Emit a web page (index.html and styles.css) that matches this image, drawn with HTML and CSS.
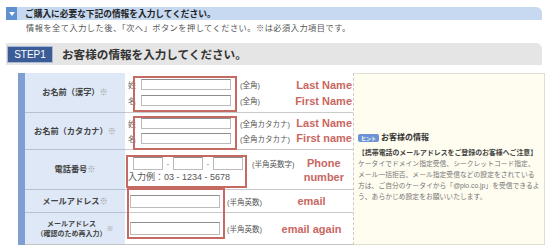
FILE: index.html
```html
<!DOCTYPE html>
<html lang="ja">
	<head>
		<meta charset="UTF-8" />
		<meta name="viewport" content="width=device-width, initial-scale=1.0" />
		<title>お客様情報の入力</title>

		<link rel="stylesheet" href="styles.css">
	</head>

	<body>
		<div class="notice">
			<span class="notice__icon"></span>
			<span class="notice__title">ご購入に必要な下記の情報を入力してください。</span>
		</div>
		<p class="lead">情報を全て入力した後、「次へ」ボタンを押してください。※は必須入力項目です。</p>

		<div class="step">
			<span class="step__label">STEP1</span>
			<h2 class="step__title">お客様の情報を入力してください。</h2>
		</div>

		<div class="form">
			<div class="form__stripe"></div>

			<div class="label">お名前（漢字）<span class="req">※</span></div>
			<div class="field">
				<div class="pairs">
					<div class="pair"><span class="pair__key">姓</span><input type="text" class="input input--name" /><span class="note">(全角)</span></div>
					<div class="pair"><span class="pair__key">名</span><input type="text" class="input input--name" /><span class="note">(全角)</span></div>
				</div>
				<div class="memo"><span>Last Name</span><span>First Name</span></div>
			</div>

			<div class="label">お名前（カタカナ）<span class="req">※</span></div>
			<div class="field">
				<div class="pairs pairs--tight">
					<div class="pair"><span class="pair__key">姓</span><input type="text" class="input input--name" /><span class="note">(全角カタカナ)</span></div>
					<div class="pair"><span class="pair__key">名</span><input type="text" class="input input--name" /><span class="note">(全角カタカナ)</span></div>
				</div>
				<div class="memo memo--tight"><span>Last Name</span><span>First name</span></div>
			</div>

			<div class="label">電話番号<span class="req">※</span></div>
			<div class="field">
				<div class="phone">
					<div class="phone__inputs">
						<input type="text" class="input input--tel" /><span class="dash">-</span>
						<input type="text" class="input input--tel" /><span class="dash">-</span>
						<input type="text" class="input input--tel" />
						<span class="note note--phone">(半角英数字)</span>
					</div>
					<div class="phone__example">入力例：03 - 1234 - 5678</div>
				</div>
				<div class="memo memo--phone"><span>Phone</span><span>number</span></div>
			</div>

			<div class="label">メールアドレス<span class="req">※</span></div>
			<div class="field field--mail">
				<input type="text" class="input input--mail" /><span class="note note--mail">(半角英数)</span>
				<div class="memo memo--mail">email</div>
			</div>

			<div class="label label--last">メールアドレス<br />（確認のため再入力）<span class="req">※</span></div>
			<div class="field field--mail field--last">
				<input type="text" class="input input--mail" /><span class="note note--mail">(半角英数)</span>
				<div class="memo memo--mail">email again</div>
			</div>

			<div class="hint">
				<p class="hint__title"><span class="badge">ヒント</span>お客様の情報</p>
				<p class="hint__caution">【携帯電話のメールアドレスをご登録のお客様へご注意】</p>
				<p class="hint__text">ケータイでドメイン指定受信、シークレットコード指定、<br />メール一括拒否、メール指定受信などの設定をされている<br />方は、ご自分のケータイから「@pio.co.jp」を受信できるよ<br />う、あらかじめ設定をお願いいたします。</p>
			</div>

			<!-- annotation frames -->
			<div class="mark mark--name"></div>
			<div class="mark mark--kana"></div>
			<div class="mark mark--tel"></div>
			<div class="mark mark--mail"></div>
		</div>
	</body>
</html>
```

FILE: styles.css
```css
* {
	margin: 0;
	padding: 0;
	box-sizing: border-box;
}

body {
	font-family: "Liberation Sans", "Noto Sans CJK JP", sans-serif;
	color: #333;
	background: #fff;
}

.notice {
	display: flex;
	align-items: center;
	height: 13px;
	margin: 7px 8px 0 6px;
	background: #c6d9f1;
	border-radius: 0 6px 0 0;
}
.notice__icon {
	display: flex;
	align-items: center;
	justify-content: center;
	width: 11px;
	height: 13px;
	background: #5f90d2;
}
.notice__icon::after {
	content: "";
	border-left: 3.5px solid transparent;
	border-right: 3.5px solid transparent;
	border-top: 4px solid #fff;
}
.notice__title {
	margin-left: 8px;
	font-size: 8.7px;
	font-weight: bold;
	color: #222;
}

.lead {
	margin: 3px 0 0 26px;
	font-size: 8.2px;
	line-height: 12px;
	letter-spacing: 0.5px;
	color: #555;
}

.step {
	display: flex;
	align-items: center;
	height: 22px;
	margin: 8px 8px 0 6px;
	background: #e5e5e5;
	border-radius: 0 6px 0 0;
}
.step__label {
	display: flex;
	align-items: center;
	justify-content: center;
	width: 46px;
	height: 17px;
	margin-left: 1px;
	background: #3c5c97;
	border: 1px solid #a9b9d6;
	color: #fff;
	font-size: 10px;
}
.step__title {
	margin-left: 9px;
	font-size: 11.6px;
	font-weight: bold;
	color: #333;
}

.form {
	position: relative;
	display: grid;
	grid-template-columns: 7px 100px 228px 192px;
	grid-template-rows: 40px 37px 40px 23px 32px;
	width: 527px;
	margin: 8px 0 0 18px;
}
.form__stripe {
	grid-column: 1;
	grid-row: 1 / -1;
	background: #7f9fd2;
}

.label {
	grid-column: 2;
	display: flex;
	align-items: center;
	justify-content: center;
	text-align: center;
	background: #dee8f6;
	border-bottom: 1px solid #b6c2d4;
	font-size: 8.2px;
	line-height: 11px;
	font-weight: bold;
	color: #444;
}
.label--last {
	font-size: 7px;
	line-height: 10px;
}
.req {
	font-weight: normal;
	color: #999;
}

.field {
	grid-column: 3;
	display: flex;
	align-items: center;
	padding-left: 3px;
	border-bottom: 1px solid #cacaca;
}
.field--mail {
	padding-left: 5px;
}
.label--last,
.field--last {
	border-bottom-color: #c4c4c4;
}

.input {
	height: 11px;
	border: 1px solid #bbb;
	border-top-color: #8d8d8d;
	background: #fff;
	outline: none;
}
.input--name {
	width: 90px;
}
.input--tel {
	width: 30px;
	height: 13px;
}
.input--mail {
	width: 90px;
	height: 13px;
}

.pairs {
	display: flex;
	flex-direction: column;
	gap: 5px;
}
.pairs--tight {
	gap: 4px;
}
.pair {
	display: flex;
	align-items: center;
}
.pair__key {
	width: 9px;
	margin-right: 4px;
	font-size: 8px;
	color: #666;
}

.note {
	margin-left: 9px;
	font-size: 7.5px;
	color: #555;
}
.note--mail {
	margin-left: 7px;
}

.phone {
	display: flex;
	flex-direction: column;
	gap: 1px;
}
.phone__inputs {
	display: flex;
	align-items: center;
	padding-left: 5px;
}
.dash {
	width: 10px;
	text-align: center;
	font-size: 7px;
	color: #666;
}
.phone__example {
	font-size: 9px;
	line-height: 12px;
	color: #555;
}

.memo {
	display: flex;
	flex-direction: column;
	align-items: flex-end;
	margin-left: auto;
	padding-right: 1px;
	font-size: 11px;
	line-height: 16px;
	font-weight: bold;
	color: #c9675f;
}
.memo--tight {
	line-height: 15px;
}
.memo--phone {
	align-items: center;
	margin-right: 8px;
	line-height: 14px;
}
.memo--mail {
	width: 80px;
	margin-right: 1px;
	text-align: center;
	align-items: center;
}

.hint {
	grid-column: 4;
	grid-row: 1 / -1;
	padding: 59px 3px 0 4px;
	background: #fffdf0;
	border: 1px solid #e2dfd2;
	border-left: 1px dashed #c9c9c9;
	white-space: nowrap;
}
.hint__title {
	display: flex;
	align-items: center;
	font-size: 8px;
	line-height: 10px;
	font-weight: bold;
	color: #333;
}
.badge {
	display: inline-flex;
	align-items: center;
	justify-content: center;
	width: 21px;
	height: 8px;
	margin-right: 2px;
	background: #6e93d5;
	border-radius: 2px;
	color: #fff;
	font-size: 5px;
}
.hint__caution {
	margin-top: 5px;
	font-size: 6.9px;
	line-height: 10px;
	font-weight: bold;
	color: #444;
}
.hint__text {
	font-size: 6.8px;
	line-height: 11px;
	color: #777;
}

.mark {
	position: absolute;
	border: 2px solid #c46a62;
	pointer-events: none;
}
.mark--name {
	left: 115px;
	top: 3px;
	width: 104px;
	height: 36px;
}
.mark--kana {
	left: 115px;
	top: 43px;
	width: 104px;
	height: 34px;
}
.mark--tel {
	left: 108px;
	top: 82px;
	width: 121px;
	height: 33px;
}
.mark--mail {
	left: 109px;
	top: 115px;
	width: 98px;
	height: 51px;
}
```
